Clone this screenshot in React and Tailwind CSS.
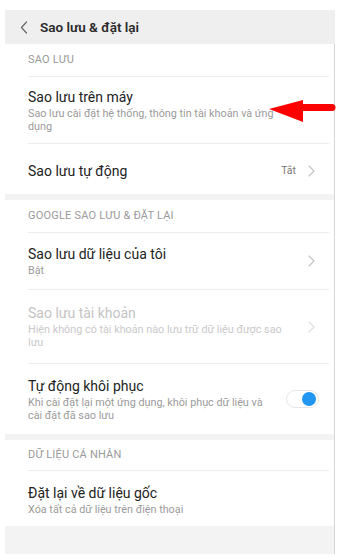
import React from 'react';

const font = { fontFamily: 'Roboto, "Noto Sans", sans-serif' };

// Small chevron used on the right side of rows
const Chevron = ({ className }) => (
  <svg width="7" height="12" viewBox="0 0 7 12" className={className} fill="none">
    <path d="M1 1l5 5-5 5" stroke="currentColor" strokeWidth="1.1" strokeLinecap="round" strokeLinejoin="round" />
  </svg>
);

const SectionHeader = ({ label, h }) => (
  <div className={`ml-[23px] mr-[5px] flex items-center border-b border-[#ececec] ${h}`}>
    <span className="text-[11px] tracking-[0.2px] text-[#9a9a9a]">{label}</span>
  </div>
);

const Band = () => <div className="h-[6px] bg-[#f3f3f3]" />;

const Row = ({ title, sub, pad, disabled, right, last, subW = 'max-w-[264px]' }) => (
  <div className={`ml-[23px] mr-[5px] flex items-center ${last ? '' : 'border-b border-[#ececec]'} ${pad}`}>
    <div className="flex-1 min-w-0">
      <div className={`text-[14px] leading-[18px] ${disabled ? 'text-[#c4c4c4]' : 'text-[#222]'}`}>{title}</div>
      {sub && (
        <div className={`mt-[1px] ${subW} text-[10.8px] leading-[13px] ${disabled ? 'text-[#c9c9c9]' : 'text-[#9b9b9b]'}`}>{sub}</div>
      )}
    </div>
    {right}
  </div>
);

const Toggle = () => (
  <div className="absolute right-[15px] top-1/2 flex h-[18px] w-[33px] -translate-y-1/2 items-center justify-end rounded-full border border-[#e6e6e6] bg-white pr-[2px]">
    <div className="h-[14px] w-[14px] rounded-full bg-[#2196f3]" />
  </div>
);

export default function App() {
  return (
    <div className="relative h-[557px] w-[340px] overflow-hidden bg-white" style={font}>
      <div className="ml-[5px] mt-[10px] w-[330px]">
        {/* top bar */}
        <div className="flex h-[34px] items-center bg-[#efefef]">
          <svg width="8" height="13" viewBox="0 0 8 13" className="ml-[15px] text-[#666]" fill="none">
            <path d="M6.5 1L1.5 6.5l5 5.5" stroke="currentColor" strokeWidth="1.2" strokeLinecap="round" strokeLinejoin="round" />
          </svg>
          <span className="ml-[12px] text-[13.5px] font-semibold text-[#2a2a2a]">Sao lưu &amp; đặt lại</span>
        </div>

        <div className="border-r border-[#d6d6d6]">
          <SectionHeader label="SAO LƯU" h="h-[33px]" />
          <Row
            title="Sao lưu trên máy"
            sub="Sao lưu cài đặt hệ thống, thông tin tài khoản và ứng dụng"
            pad="pt-[11px] pb-[10px]"
          />
          <div className="ml-[23px] mr-[5px] flex h-[50px] items-center pt-[4px]">
            <span className="flex-1 text-[14px] text-[#222]">Sao lưu tự động</span>
            <span className="mr-[12px] text-[10.5px] text-[#777]">Tắt</span>
            <Chevron className="mr-[14px] text-[#c4c4c4]" />
          </div>
          <Band />

          <SectionHeader label="GOOGLE SAO LƯU & ĐẶT LẠI" h="h-[33px]" />
          <Row
            title="Sao lưu dữ liệu của tôi"
            sub="Bật"
            pad="pt-[12px] pb-[12px]"
            right={<Chevron className="mr-[14px] text-[#c4c4c4]" />}
          />
          <Row
            title="Sao lưu tài khoản"
            sub="Hiện không có tài khoản nào lưu trữ dữ liệu được sao lưu"
            pad="pt-[14px] pb-[14px]"
            disabled
            right={<Chevron className="mr-[14px] text-[#dedede]" />}
          />
          <div className="relative">
            <Row
              title="Tự động khôi phục"
              sub="Khi cài đặt lại một ứng dụng, khôi phục dữ liệu và cài đặt đã sao lưu"
              pad="pt-[13px] pb-[12px]"
              subW="max-w-[248px]"
              last
            />
            <Toggle />
          </div>
          <Band />

          <SectionHeader label="DỮ LIỆU CÁ NHÂN" h="h-[31px]" />
          <Row
            title="Đặt lại về dữ liệu gốc"
            sub="Xóa tất cả dữ liệu trên điện thoại"
            pad="pt-[13px] pb-[10px]"
            last
          />
          <div className="h-[28px] bg-[#f3f3f3]" />
        </div>
      </div>

      {/* red pointer arrow */}
      <svg className="absolute left-[266px] top-[98px]" width="72" height="26" viewBox="0 0 72 26">
        <polygon points="3,11 37,2 37,24" fill="#ff0000" />
        <path d="M34 9.5H66" stroke="#ff0000" strokeWidth="7" strokeLinecap="round" />
      </svg>
    </div>
  );
}
